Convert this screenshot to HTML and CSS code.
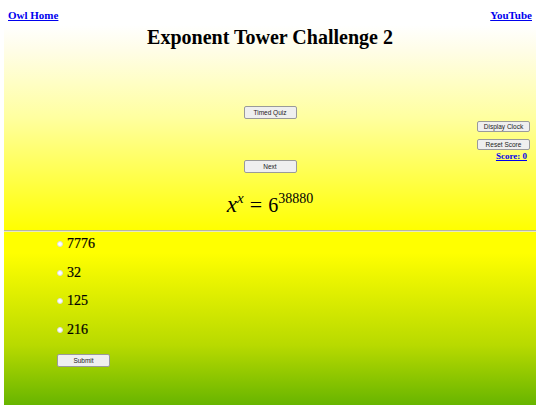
FILE: index.html
```html
<!DOCTYPE html>
<html lang="en">
<head>
  <meta charset="UTF-8" />
  <title>Exponent Tower Challenge 2</title>
  <link rel="stylesheet" href="styles.css">
</head>
<body>
  <div class="top-links">
    <a href="#">Owl Home</a>
    <a href="#">YouTube</a>
  </div>

  <div class="upper">
    <h1>Exponent Tower Challenge 2</h1>
    <div class="controls">
      <div></div>
      <div class="center-col">
        <button class="btn">Timed Quiz</button>
        <button class="btn next">Next</button>
        <div class="problem"><i>x</i><sup><i>x</i></sup><span class="eq">=</span>6<sup>38880</sup></div>
      </div>
      <div class="right-col">
        <button class="btn">Display Clock</button>
        <button class="btn">Reset Score</button>
        <a href="#" class="score">Score: 0</a>
      </div>
    </div>
  </div>

  <hr>

  <div class="lower">
    <label class="option"><input type="radio" name="ans"> 7776</label>
    <label class="option"><input type="radio" name="ans"> 32</label>
    <label class="option"><input type="radio" name="ans"> 125</label>
    <label class="option"><input type="radio" name="ans"> 216</label>
    <button class="btn submit">Submit</button>
  </div>
</body>
</html>
```

FILE: styles.css
```css
body {
  margin: 0 4px;
  font-family: "Liberation Serif", serif;
  background: #fff;
}

a {
  color: #0000ee;
  font-weight: bold;
}

.top-links {
  display: flex;
  justify-content: space-between;
  padding: 9px 4px 0;
  font-size: 11px;
  height: 16px;
}

.upper {
  background: linear-gradient(#ffffff 0%, #fffde8 12%, #ffffa0 45%, #ffff00 100%);
  height: 205px;
}

h1 {
  margin: 0;
  padding-top: 1px;
  text-align: center;
  font-size: 20px;
}

.controls {
  display: grid;
  grid-template-columns: 1fr auto 1fr;
}

.center-col {
  display: flex;
  flex-direction: column;
  align-items: center;
  padding-top: 57px;
}

.right-col {
  display: flex;
  flex-direction: column;
  align-items: flex-end;
  padding-top: 72px;
  padding-right: 6px;
  gap: 7px;
}

.btn {
  width: 53px;
  height: 13px;
  padding: 0;
  font-family: "Liberation Sans", Arial, sans-serif;
  font-size: 6.5px;
  color: #222;
  background: #efefef;
  border: 1px solid #9a9a9a;
  border-radius: 2px;
}

.right-col .btn {
  height: 11px;
}

.next {
  margin-top: 41px;
}

.score {
  font-size: 9px;
  margin-top: -6px;
  padding-right: 3px;
}

.problem {
  margin-top: 19px;
  font-size: 20px;
  font-family: "Liberation Serif", serif;
}

.problem i {
  font-size: 23px;
}

.problem sup {
  font-size: 14px;
  vertical-align: 9px;
  line-height: 0;
}

.problem sup i {
  font-size: 15px;
}

.eq {
  margin: 0 6px;
  font-size: 22px;
}

hr {
  margin: 0;
  border: 0;
  border-top: 1px solid #b8b8a0;
  border-bottom: 1px solid #e8e8c0;
  background: #ffff00;
}

.lower {
  background: linear-gradient(#ffff00 0%, #ffff00 12%, #b8da00 65%, #66b400 100%);
  padding-left: 53px;
  box-sizing: border-box;
  height: 174px;
  display: flex;
  flex-direction: column;
  align-items: flex-start;
}

.option {
  display: flex;
  align-items: center;
  font-size: 14px;
  height: 28.5px;
  gap: 4px;
  margin-top: -2px;
  margin-bottom: 2px;
  color: #000;
  -webkit-text-stroke: 0.2px #000;
}

.option input {
  appearance: none;
  width: 6px;
  height: 6px;
  margin: 0;
  border-radius: 50%;
  background: #fff;
  border: 1px solid #ddd;
}

.submit {
  margin-top: 8px;
}
```
